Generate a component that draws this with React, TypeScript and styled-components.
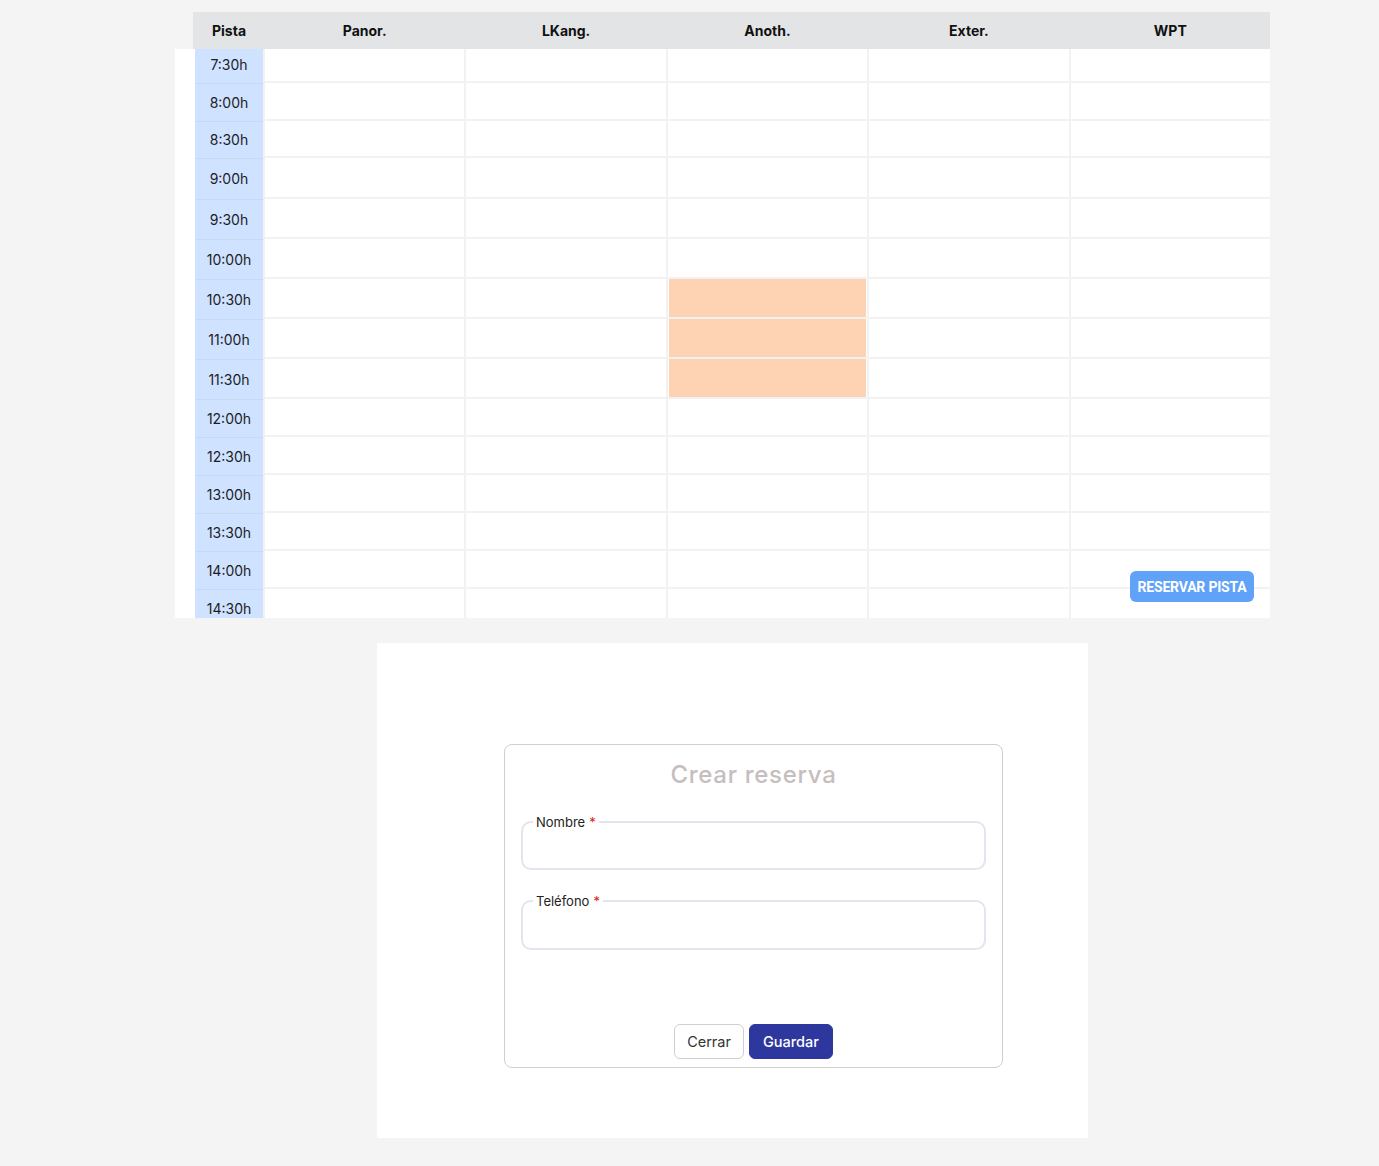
import React from "react";
import styled, { createGlobalStyle } from "styled-components";

const Global = createGlobalStyle`
  html, body { margin: 0; padding: 0; background: #f4f4f5; }
  body { font-family: "Inter", "Open Sans", sans-serif; color: #1d1d1f; }
  * { box-sizing: border-box; }
`;

const Page = styled.div`
  padding-top: 12px;
  min-height: 1166px;
  background: #f4f4f5;
`;

const TableWrap = styled.div`
  position: relative;
  margin-left: 175px;
  width: 1095px;
  height: 606px;
  overflow: hidden;
`;

const Header = styled.div`
  margin-left: 18px;
  padding-left: 2px;
  height: 37px;
  background: #e3e4e6;
  display: grid;
  grid-template-columns: 68px repeat(5, 1fr);
  column-gap: 2px;
  align-items: center;
`;

const HeadCell = styled.div`
  text-align: center;
  font-weight: 700;
  font-size: 14px;
  color: #111;
`;

const Body = styled.div`
  background: #ffffff;
  padding-left: 20px;
`;

const Row = styled.div<{ $h: number }>`
  display: grid;
  grid-template-columns: 68px repeat(5, 1fr);
  column-gap: 2px;
  height: ${(p) => p.$h}px;
  background: #f3f2f3;
`;

const TimeCell = styled.div<{ $first?: boolean }>`
  background: #cfe2ff;
  border-top: 1px solid ${(p) => (p.$first ? "#cfe2ff" : "#c8daf3")};
  display: flex;
  align-items: center;
  justify-content: center;
  font-size: 14px;
  color: #1d1d1f;
  padding-bottom: ${(p) => (p.$first ? 4 : 1)}px;
`;

const Cell = styled.div<{ $booked?: boolean }>`
  background: #ffffff;
  margin-bottom: 2px;
  position: relative;
  &::after {
    content: "";
    display: ${(p) => (p.$booked ? "block" : "none")};
    position: absolute;
    inset: 0 1px 0 1px;
    background: #fdd3b4;
  }
`;

const ReserveButton = styled.button`
  position: absolute;
  right: 16px;
  top: 559px;
  height: 31px;
  width: 124px;
  padding: 0;
  border: none;
  border-radius: 6px;
  background: #5fa2f7;
  color: #ffffff;
  font-family: "Roboto", sans-serif;
  font-weight: 700;
  font-size: 14px;
  letter-spacing: -0.2px;
`;

const Panel = styled.div`
  margin-top: 25px;
  margin-left: 377px;
  width: 711px;
  height: 495px;
  background: #ffffff;
  padding-top: 101px;
  padding-left: 127px;
`;

const Card = styled.div`
  width: 499px;
  height: 324px;
  border: 1px solid #cfcfcf;
  border-radius: 8px;
  padding: 14px 16px 8px 16px;
  display: flex;
  flex-direction: column;
`;

const Title = styled.h2`
  margin: 0;
  text-align: center;
  font-size: 24px;
  font-weight: 500;
  letter-spacing: 0.7px;
  color: #c6bebe;
  line-height: 32px;
`;

const Field = styled.fieldset<{ $h: number }>`
  margin: 23px 0 0 0;
  height: ${(p) => p.$h}px;
  border: 2px solid #e3e5ee;
  border-radius: 10px;
  padding: 0 10px;
`;

const Legend = styled.legend`
  padding: 0 3px;
  font-size: 13px;
  color: #222;
  line-height: 16px;
`;

const Star = styled.span`
  color: #e02020;
  margin-left: 4px;
`;

const Actions = styled.div`
  margin-top: auto;
  display: flex;
  justify-content: center;
  gap: 5px;
`;

const Btn = styled.button<{ $primary?: boolean }>`
  height: 35px;
  padding: 0 ${(p) => (p.$primary ? 13 : 12)}px;
  font-family: "Inter", "Open Sans", sans-serif;
  font-size: 14.5px;
  font-weight: ${(p) => (p.$primary ? 500 : 400)};
  border-radius: 6px;
  border: 1px solid ${(p) => (p.$primary ? "#2e379e" : "#cfcfcf")};
  background: ${(p) => (p.$primary ? "#2e379e" : "#ffffff")};
  color: ${(p) => (p.$primary ? "#ffffff" : "#333")};
`;

const columns = ["Panor.", "LKang.", "Anoth.", "Exter.", "WPT"];
const rows: { t: string; h: number }[] = [
  { t: "7:30h", h: 34 },
  { t: "8:00h", h: 38 },
  { t: "8:30h", h: 37 },
  { t: "9:00h", h: 41 },
  { t: "9:30h", h: 40 },
  { t: "10:00h", h: 40 },
  { t: "10:30h", h: 40 },
  { t: "11:00h", h: 40 },
  { t: "11:30h", h: 40 },
  { t: "12:00h", h: 38 },
  { t: "12:30h", h: 38 },
  { t: "13:00h", h: 38 },
  { t: "13:30h", h: 38 },
  { t: "14:00h", h: 38 },
  { t: "14:30h", h: 38 },
];
const booked = new Set(["10:30h|2", "11:00h|2", "11:30h|2"]);

export default function App() {
  return (
    <Page>
      <Global />
      <TableWrap>
        <Header>
          <HeadCell>Pista</HeadCell>
          {columns.map((c) => (
            <HeadCell key={c}>{c}</HeadCell>
          ))}
        </Header>
        <Body>
          {rows.map((r, i) => (
            <Row key={r.t} $h={r.h}>
              <TimeCell $first={i === 0}>{r.t}</TimeCell>
              {columns.map((c, ci) => (
                <Cell key={c} $booked={booked.has(`${r.t}|${ci}`)} />
              ))}
            </Row>
          ))}
        </Body>
        <ReserveButton>RESERVAR PISTA</ReserveButton>
      </TableWrap>
      <Panel>
        <Card>
          <Title>Crear reserva</Title>
          <Field $h={56}>
            <Legend>
              Nombre<Star>*</Star>
            </Legend>
          </Field>
          <Field $h={57}>
            <Legend>
              Teléfono<Star>*</Star>
            </Legend>
          </Field>
          <Actions>
            <Btn>Cerrar</Btn>
            <Btn $primary>Guardar</Btn>
          </Actions>
        </Card>
      </Panel>
    </Page>
  );
}
